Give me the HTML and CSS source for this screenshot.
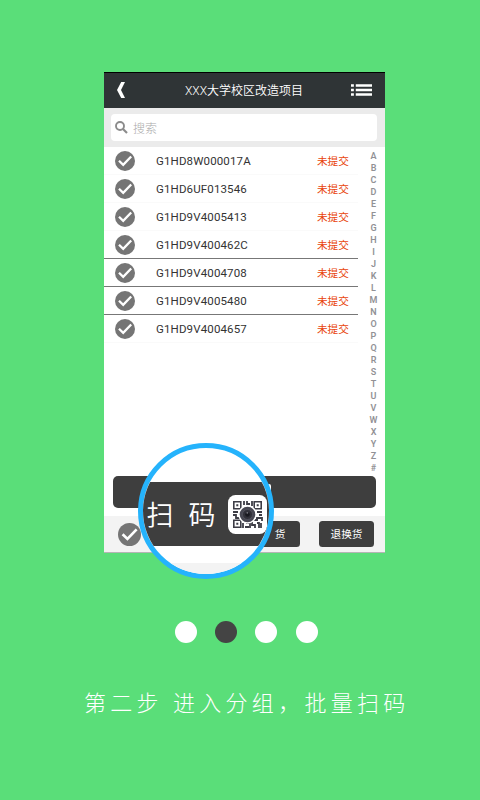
FILE: index.html
```html
<!DOCTYPE html>
<html lang="zh-CN">
<head>
<meta charset="utf-8">
<title>批量扫码</title>
<link rel="stylesheet" href="styles.css">
</head>
<body>
<svg width="0" height="0" class="defs">
  <symbol id="check" viewBox="0 0 20 20"><circle cx="10" cy="10" r="10" fill="#757575"/><path d="M4 9.8l4.2 4.1 8-8.4" fill="none" stroke="#fff" stroke-width="2.3"/></symbol>
</svg>
<main class="guide">
  <section class="phone">
    <header class="topbar">
      <svg class="back" viewBox="0 0 10 16"><path d="M5.2 0H9L5 8l4 8H5.2L1 8z" fill="#fff"/></svg>
      <h1>XXX大学校区改造项目</h1>
      <svg class="menu" viewBox="0 0 22 12"><path d="M0 0h3v2.5H0zM5 0h17v2.5H5zM0 4.8h3v2.5H0zM5 4.8h17v2.5H5zM0 9.5h3V12H0zM5 9.5h17V12H5z" fill="#fff"/></svg>
    </header>
    <div class="search"><div class="field">
      <svg viewBox="0 0 13 13"><circle cx="5" cy="5" r="4" fill="none" stroke="#8b8b8b" stroke-width="1.9"/><path d="M8 8l4 4" stroke="#8b8b8b" stroke-width="2.2"/></svg>
      <span>搜索</span>
    </div></div>
    <div class="content">
      <ul class="rows">
        <li><svg><use href="#check"/></svg><span class="code">G1HD8W000017A</span><span class="state">未提交</span></li>
        <li><svg><use href="#check"/></svg><span class="code">G1HD6UF013546</span><span class="state">未提交</span></li>
        <li><svg><use href="#check"/></svg><span class="code">G1HD9V4005413</span><span class="state">未提交</span></li>
        <li class="ruled"><svg><use href="#check"/></svg><span class="code">G1HD9V400462C</span><span class="state">未提交</span></li>
        <li class="ruled"><svg><use href="#check"/></svg><span class="code">G1HD9V4004708</span><span class="state">未提交</span></li>
        <li class="ruled"><svg><use href="#check"/></svg><span class="code">G1HD9V4005480</span><span class="state">未提交</span></li>
        <li><svg><use href="#check"/></svg><span class="code">G1HD9V4004657</span><span class="state">未提交</span></li>
      </ul>
      <div class="index"><b>A</b><b>B</b><b>C</b><b>D</b><b>E</b><b>F</b><b>G</b><b>H</b><b>I</b><b>J</b><b>K</b><b>L</b><b>M</b><b>N</b><b>O</b><b>P</b><b>Q</b><b>R</b><b>S</b><b>T</b><b>U</b><b>V</b><b>W</b><b>X</b><b>Y</b><b>Z</b><b>#</b></div>
    </div>
    <div class="scanbar"><i></i></div>
    <footer class="actions">
      <svg><use href="#check"/></svg>
      <span class="btn ship">货</span>
      <span class="btn">退换货</span>
    </footer>
    <div class="lens">
      <div class="band">
        <span>扫</span><span>码</span>
        <svg class="qr" viewBox="0 0 39 39">
          <rect width="39" height="39" rx="7.5" fill="#fff"/>
          <g fill="none" stroke="#3d3d46" stroke-width="1.6">
            <path d="M5.8 6.8h7v7h-7zM26.2 6.8h7v7h-7zM5.8 25.2h7v7h-7z"/>
            <path d="M16 6v4M19 6v3h3M24 6v5M16 12h6M5 17h5M5 20h3v3h4M29 17h5M31 20h3M28 23h6v3M15 28v5M18 28h4v5M24 27v3h3v3M29 28h2v5M33 28v5M17 32h4M26 25h4" stroke-width="1.8"/>
          </g>
          <path d="M8.3 9.3h2v2h-2zM28.7 9.3h2v2h-2zM8.3 27.7h2v2h-2z" fill="#3d3d46"/>
          <circle cx="19.5" cy="19.5" r="9.2" fill="#fff"/>
          <circle cx="19.5" cy="19.5" r="7.8" fill="#474752"/>
          <circle cx="19.5" cy="19.5" r="5" fill="#303039" stroke="#55555f" stroke-width=".8"/>
          <circle cx="19.5" cy="19.5" r="2.3" fill="#18181f"/>
          <circle cx="19.3" cy="17.8" r=".9" fill="#77777f"/>
        </svg>
      </div>
      <div class="under"></div>
    </div>
  </section>
  <nav class="dots"><i></i><i class="on"></i><i></i><i></i></nav>
  <p class="caption">第二步 进入分组，批量扫码</p>
</main>
</body>
</html>
```
FILE: styles.css
```css
* { box-sizing: border-box; margin: 0; padding: 0; }
body { font-family: Roboto, "Noto Sans CJK SC", sans-serif; }
.defs { position: absolute; }
.guide { width: 480px; height: 800px; background: #5ade79; padding-top: 72px; overflow: hidden; }
.phone { position: relative; width: 281px; height: 481px; margin-left: 104px; background: #fff; border-bottom: 1px solid #b5b5b5; display: flex; flex-direction: column; }

.topbar { height: 36px; background: #2f3436; border-top: 1px solid #000; display: flex; align-items: center; justify-content: space-between; padding: 0 13px 0 12px; }
.topbar h1 { font-size: 12px; font-weight: 350; color: #fff; line-height: 16px; padding: 1px 0 0 11px; }
.back { width: 10px; height: 16px; margin-top: -2px; }
.menu { width: 21px; height: 12px; margin-top: -1px; }

.search { height: 39px; background: #ebebeb; padding: 6px 8px 6px 7px; }
.field { height: 27px; background: #fff; border-radius: 4px; display: flex; align-items: center; padding-left: 4px; font-size: 12px; color: #aaa; gap: 5px; font-weight: 300; }
.field svg { width: 13px; height: 13px; }

.content { height: 329px; display: flex; justify-content: space-between; }
.rows { width: 254px; list-style: none; }
.rows li { height: 28px; border-bottom: 1px solid #fafafa; display: flex; align-items: center; padding: 0 9px 0 11px; }
.rows li.ruled { border-bottom-color: #777; }
.rows svg { width: 20px; height: 20px; overflow: visible; }
.code { margin-left: 21px; flex: 1; font-size: 11.5px; letter-spacing: .14px; color: #333; padding-top: 1px; }
.state { font-size: 10.7px; color: #e8430a; }
.index { width: 23px; padding-top: 3px; display: flex; flex-direction: column; align-items: center; font-size: 9px; color: #919195; }
.index b { height: 12px; line-height: 13px; font-weight: 600; }

.scanbar { width: 263px; height: 32px; margin-left: 9px; background: #3e3e3e; border-radius: 5px; padding: 8px 0 0 148px; }
.scanbar i { display: block; width: 9.5px; height: 14px; background: #fff; border-radius: 2px; }

.actions { margin-top: 8px; height: 36px; background: #f3f3f3; display: flex; align-items: center; padding: 0 11px 0 14px; }
.actions svg { width: 23px; height: 23px; }
.btn { width: 55px; height: 26px; background: #3e3e3e; border-radius: 3.5px; color: #fff; font-size: 10.7px; line-height: 27px; text-align: center; }
.ship { margin-left: auto; margin-right: 19px; padding-left: 15px; }

.lens { position: absolute; left: 34px; top: 371px; width: 136px; height: 136px; border: 5px solid #25b3fc; border-radius: 50%; background: #fff; overflow: hidden; padding-top: 34px; }
.band { height: 64px; background: #3e3e3e; color: #fff; display: flex; align-items: center; padding-left: 3.5px; font-size: 27px; }
.band span { width: 27px; margin-right: 15px; line-height: 38px; font-weight: 350; padding-top: 4px; }
.band .qr { width: 39px; height: 39px; margin-left: -2.5px; flex: none; }
.under { margin-top: 17px; height: 20px; background: #f3f3f3; }

.dots { display: flex; gap: 18px; margin: 68px 0 0 175px; }
.dots i { width: 22px; height: 22px; border-radius: 50%; background: #fff; }
.dots .on { background: #444; }
.dots i:last-child { margin-left: 1px; }

.caption { margin: 41px 0 0 84px; font: 300 22px/34px "AR PL UKai CN", KaiTi, "Noto Sans CJK SC", sans-serif; letter-spacing: 4.3px; word-spacing: .9px; color: #fff; white-space: nowrap; }
```
